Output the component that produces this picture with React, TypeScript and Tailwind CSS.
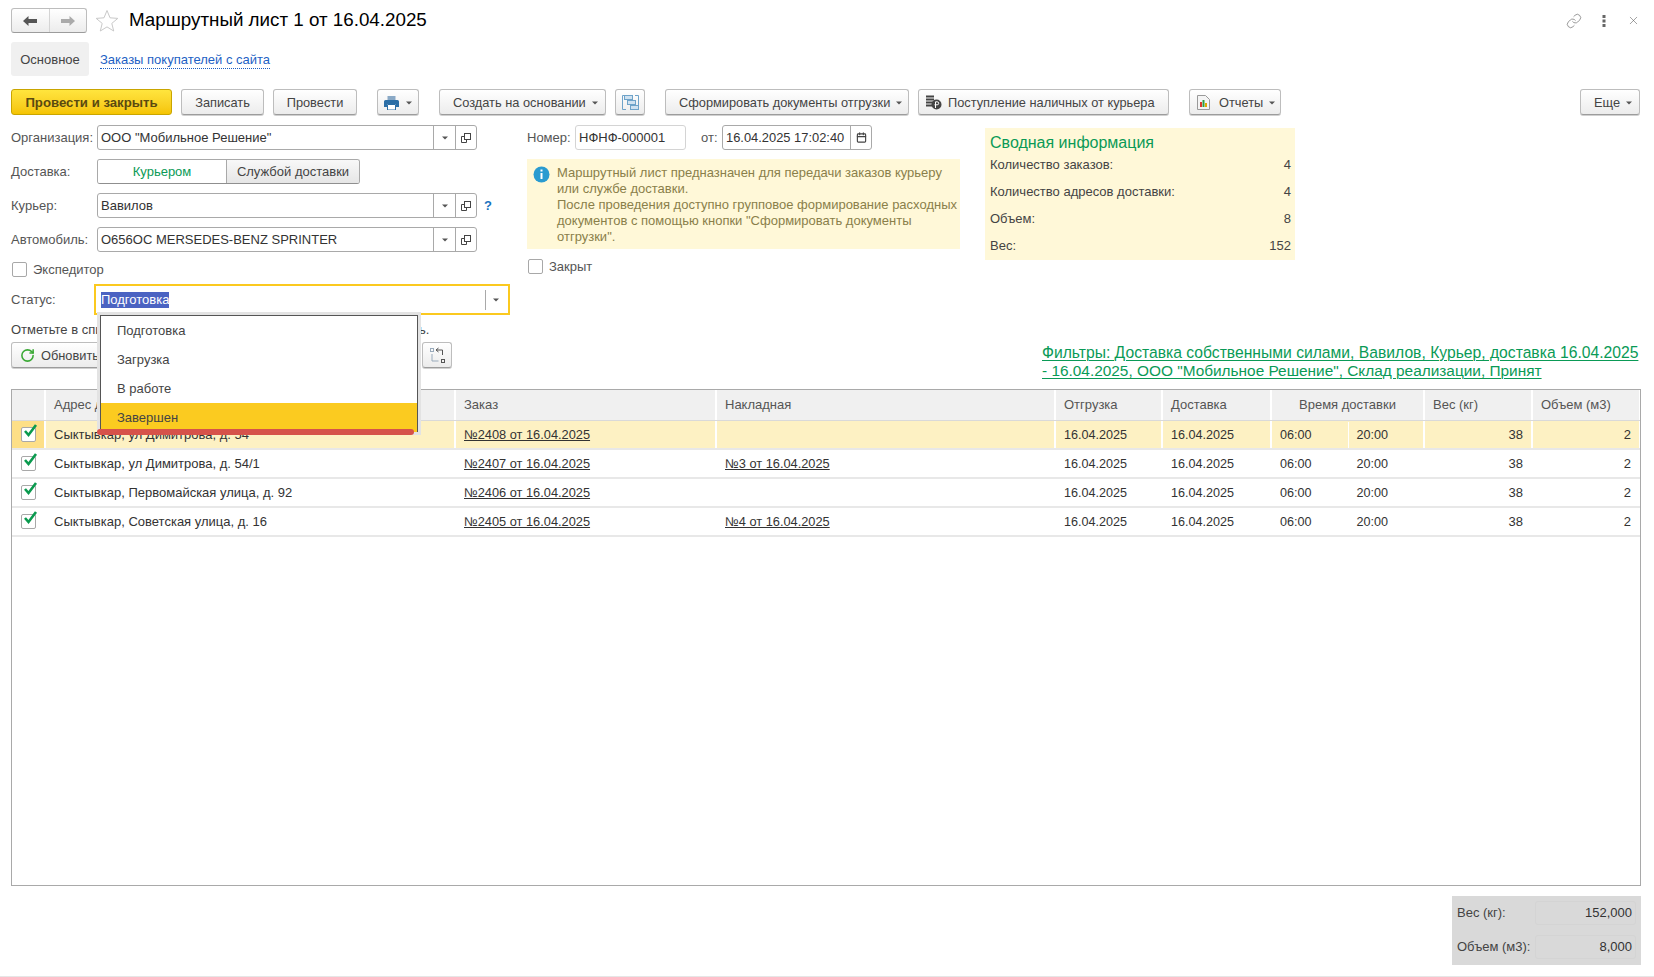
import React from "react";
import { Link, X, RotateCw, Calendar } from "lucide-react";

const Caret = ({ className = "" }: { className?: string }) => (
  <svg width="6" height="4" viewBox="0 0 6 4" className={"shrink-0 " + className}>
    <path d="M0 .5h6L3 3.500z" fill="#555" />
  </svg>
);

const OpenIcon = () => (
  <svg width="12" height="12" viewBox="0 0 12 12" fill="none" stroke="#444" strokeWidth="1">
    <rect x="4.5" y="1.5" width="6" height="6" />
    <path d="M4.5 4.5h-3v6h5v-3" />
  </svg>
);

const Btn = ({ children, className = "" }: { children: React.ReactNode; className?: string }) => (
  <div className={"flex h-[26px] shrink-0 items-center rounded-[3px] border border-[#bdbdbd] border-b-[#9c9c9c] bg-gradient-to-b from-white to-[#ececec] pt-[1px] text-[12.8px] text-[#444] shadow-[0_1px_0_#d0d0d0] " + className}>
    {children}
  </div>
);

const Field = ({ label, value, extra }: { label: string; value: string; extra?: React.ReactNode }) => (
  <div className="flex h-[25px] items-center">
    <span className="w-[86px] shrink-0 text-[#555]">{label}</span>
    <div className="flex h-[25px] w-[380px] items-center rounded-[3px] border border-[#a9a9a9] bg-white">
      <span className="flex-1 truncate pl-[3px] text-[#333]">{value}</span>
      <span className="flex h-full w-[22px] items-center justify-center border-l border-[#a9a9a9]"><Caret /></span>
      <span className="flex h-full w-[21px] items-center justify-center border-l border-[#a9a9a9]"><OpenIcon /></span>
    </div>
    {extra}
  </div>
);

const Check = ({ checked = false }: { checked?: boolean }) => (
  <div className="relative h-[15px] w-[15px] shrink-0 rounded-[2px] border border-[#a8a8a8] bg-white">
    {checked && (
      <svg width="17" height="15" viewBox="0 0 17 15" className="absolute left-[0px] top-[-5px]" fill="none">
        <path d="M3 8l3.5 4L14 2" stroke="#0a9a4e" strokeWidth="2.6" />
      </svg>
    )}
  </div>
);

const rows = [
  { addr: "Сыктывкар, ул Димитрова, д. 54", order: "№2408 от 16.04.2025", inv: "", sel: true },
  { addr: "Сыктывкар, ул Димитрова, д. 54/1", order: "№2407 от 16.04.2025", inv: "№3 от 16.04.2025", sel: false },
  { addr: "Сыктывкар, Первомайская улица, д. 92", order: "№2406 от 16.04.2025", inv: "", sel: false },
  { addr: "Сыктывкар, Советская улица, д. 16", order: "№2405 от 16.04.2025", inv: "№4 от 16.04.2025", sel: false },
];

const cols = "grid grid-cols-[32px_410px_261px_339px_107px_109px_153px_108px_108px]";
const headCell = "flex items-center border-l-2 border-white bg-[#f0f0f0] px-2 text-[#555]";
const cell = "flex items-center border-l-2 px-2 pt-[1px] ";

export default function App() {
  return (
    <div className="relative h-[977px] w-full overflow-hidden bg-white text-[13px] leading-4 text-[#444] [font-family:'Liberation_Sans',Arial,sans-serif]">
      <div className="flex h-[976px] flex-col px-[11px] pt-2">
        {/* header */}
        <div className="flex h-[25px] items-center">
          <div className="flex h-[25px] w-[76px] rounded-[3px] border border-[#bdbdbd] border-b-[#9c9c9c] bg-gradient-to-b from-white to-[#ececec]">
            <span className="flex flex-1 items-center justify-center border-r border-[#d4d4d4]">
              <svg width="14" height="10" viewBox="0 0 14 10"><path d="M0 5l5.5-5v3H14v4H5.5v3z" fill="#555" /></svg>
            </span>
            <span className="flex flex-1 items-center justify-center">
              <svg width="14" height="10" viewBox="0 0 14 10"><path d="M14 5L8.5 0v3H0v4h8.5v3z" fill="#aaa" /></svg>
            </span>
          </div>
          <svg width="24" height="23" viewBox="0 0 24 23" className="ml-[8px]" fill="none">
            <path d="M12 1.5l3 7.3 7.8.6-6 5 1.9 7.6L12 17.900 5.300 22l1.900-7.600-6-5 7.800-.6z" stroke="#c9c9c9" />
          </svg>
          <h1 className="ml-[10px] -translate-y-[1px] text-[18.8px] leading-6 font-normal text-black">Маршрутный лист 1 от 16.04.2025</h1>
          <div className="ml-auto flex items-center pr-[3px]">
            <Link size={16} strokeWidth={1} className="text-[#666]" />
            <svg width="4" height="12" viewBox="0 0 4 12" className="ml-[20px]" fill="#666"><rect x="0.5" y="0" width="3" height="3" /><rect x="0.5" y="4.500" width="3" height="3" /><rect x="0.5" y="9" width="3" height="3" /></svg>
            <X size={13} strokeWidth={1} className="ml-[21px] text-[#555]" />
          </div>
        </div>

        {/* tabs */}
        <div className="mt-[9px] flex h-[34px] items-center">
          <div className="flex h-full w-[78px] items-center justify-center rounded-[3px] bg-[#f0f0f0] pt-[1px] text-[#444]">Основное</div>
          <span className="ml-[11px] mt-[2px] border-b border-dotted border-[#1d5fc4] text-[#1d5fc4]">Заказы покупателей с сайта</span>
        </div>

        {/* toolbar */}
        <div className="mt-[13px] flex items-center">
          <div className="flex h-[26px] w-[161px] shrink-0 items-center justify-center rounded-[3px] border border-[#c9a500] bg-gradient-to-b from-[#ffe53d] to-[#f5c400] pt-[1px] text-[13.2px] font-bold text-[#5a4a10]">Провести и закрыть</div>
          <Btn className="ml-[9px] w-[83px] justify-center">Записать</Btn>
          <Btn className="ml-[9px] w-[84px] justify-center">Провести</Btn>
          <Btn className="ml-[20px] w-[42px] justify-center gap-[7px]">
            <svg width="15" height="14" viewBox="0 0 15 14">
              <path d="M3.500 0h8v4h-8z" fill="#8aa9c6" />
              <path d="M1.500 4h12a1.500 1.500 0 0 1 1.500 1.500V11h-3V8H3v3H0V5.500A1.500 1.500 0 0 1 1.500 4z" fill="#2b6ea6" />
              <path d="M3.500 8.500h8V14h-8z" fill="#fff" stroke="#2b6ea6" />
            </svg>
            <Caret />
          </Btn>
          <Btn className="ml-[20px] w-[167px] gap-[6px] pl-[13px]">Создать на основании <Caret /></Btn>
          <Btn className="ml-[9px] w-[30px] justify-center">
            <svg width="17" height="17" viewBox="0 0 17 17" fill="none" stroke="#6ea3c9">
              <path d="M4 15.500H.5V1.500H4M13 1.500h3.500v14H13" />
              <rect x="2.500" y="1.500" width="8" height="4" fill="#cfe2f1" />
              <rect x="5.500" y="6.500" width="8" height="4" fill="#cfe2f1" />
              <rect x="8.500" y="11.500" width="8" height="4" fill="#cfe2f1" />
            </svg>
          </Btn>
          <Btn className="ml-[20px] w-[244px] gap-[6px] pl-[13px]">Сформировать документы отгрузки <Caret /></Btn>
          <Btn className="ml-[9px] w-[251px] gap-[6px] pl-[6px]">
            <svg width="17" height="15" viewBox="0 0 17 15">
              <path d="M1 1.500h8M1 4.500h8M1 7.500h8M1 10.500h6" stroke="#444" strokeWidth="2" />
              <circle cx="11.500" cy="9.500" r="5" fill="#444" />
              <path d="M10.500 13V6.800h1.700a1.500 1.500 0 0 1 0 3h-2.700" stroke="#fff" fill="none" />
            </svg>
            Поступление наличных от курьера
          </Btn>
          <Btn className="ml-[20px] w-[92px] gap-[9px] pl-[7px]">
            <svg width="13" height="15" viewBox="0 0 13 15">
              <path d="M.5.500h8l4 4v10H.5z" fill="#f4f4f4" stroke="#999" />
              <rect x="3" y="7" width="2" height="5" fill="#d9372c" />
              <rect x="5.500" y="5" width="2" height="7" fill="#2f9e44" />
              <rect x="8" y="8" width="2" height="4" fill="#e0a800" />
            </svg>
            Отчеты <Caret className="-ml-[3px]" />
          </Btn>
          <Btn className="ml-auto mr-[3px] w-[60px] gap-[6px] pl-[13px]">Еще <Caret /></Btn>
        </div>

        {/* form */}
        <div className="mt-[10px] flex items-start">
          <div className="flex w-[516px] shrink-0 flex-col">
            <Field label="Организация:" value={'ООО "Мобильное Решение"'} />
            <div className="mt-[9px] flex h-[25px] items-center">
              <span className="w-[86px] text-[#555]">Доставка:</span>
              <div className="flex h-[25px] w-[263px] overflow-hidden rounded-[3px] border border-[#a9a9a9] border-b-[#8f8f8f]">
                <span className="flex w-[128px] items-center justify-center bg-white text-[#0a9a56]">Курьером</span>
                <span className="flex flex-1 items-center justify-center border-l border-[#a9a9a9] bg-gradient-to-b from-[#f8f8f8] to-[#e6e6e6] text-[#444]">Службой доставки</span>
              </div>
            </div>
            <div className="mt-[9px]">
              <Field label="Курьер:" value="Вавилов" extra={<span className="ml-[7px] font-bold text-[#1a73c0]">?</span>} />
            </div>
            <div className="mt-[9px]">
              <Field label="Автомобиль:" value="О656ОС MERSEDES-BENZ SPRINTER" />
            </div>
            <div className="mt-[10px] flex h-[15px] items-center pl-[1px]">
              <Check />
              <span className="ml-[6px] text-[#555]">Экспедитор</span>
            </div>
            <div className="mt-[7px] flex h-[31px] items-center">
              <span className="w-[83px] shrink-0 text-[#555]">Статус:</span>
              <div className="flex h-[31px] w-[416px] items-center border-2 border-[#fbc91f] bg-white pr-[2px]">
                <span className="ml-[5px] bg-[#4b63c2] text-white">Подготовка</span>
                <span className="ml-auto flex h-[20px] w-[21px] items-center justify-center border-l border-[#a9a9a9]"><Caret /></span>
              </div>
            </div>
          </div>

          <div className="flex w-[458px] shrink-0 flex-col">
            <div className="flex h-[25px] items-center">
              <span className="w-[48px] text-[#555]">Номер:</span>
              <span className="flex h-[25px] w-[111px] items-center rounded-[3px] border border-[#d4d4d4] pl-[3px] text-[#333]">НФНФ-000001</span>
              <span className="ml-[15px] w-[21px] text-[#555]">от:</span>
              <span className="flex h-[25px] w-[150px] items-center rounded-[3px] border border-[#a9a9a9]">
                <span className="flex-1 pl-[3px] text-[12.9px] text-[#333]">16.04.2025 17:02:40</span>
                <span className="flex h-full w-[21px] items-center justify-center border-l border-[#a9a9a9]">
                  <Calendar size={11} strokeWidth={2.5} className="text-[#444]" />
                </span>
              </span>
            </div>
            <div className="mt-[9px] flex h-[90px] w-[433px] bg-[#fff8d8] pt-[6px]">
              <svg width="17" height="17" viewBox="0 0 17 17" className="ml-[6px] mt-[1px] shrink-0">
                <circle cx="8.500" cy="8.500" r="8" fill="#2a9bd0" />
                <rect x="7.500" y="7" width="2" height="6" fill="#fff" />
                <rect x="7.500" y="3.500" width="2" height="2" fill="#fff" />
              </svg>
              <p className="ml-[7px] text-[#8a7f4a]">
                Маршрутный лист предназначен для передачи заказов курьеру<br />
                или службе доставки.<br />
                После проведения доступно групповое формирование расходных<br />
                документов с помощью кнопки "Сформировать документы<br />
                отгрузки".
              </p>
            </div>
            <div className="mt-[10px] flex h-[15px] items-center pl-[1px]">
              <Check />
              <span className="ml-[6px] text-[#555]">Закрыт</span>
            </div>
          </div>

          <div className="mt-[3px] flex h-[132px] w-[310px] shrink-0 flex-col bg-[#fff8d8] pl-[5px] pr-[4px]">
            <div className="mt-[6px] text-[16px] leading-[18px] text-[#0a9a56]">Сводная информация</div>
            {[["Количество заказов:", "4"], ["Количество адресов доставки:", "4"], ["Объем:", "8"], ["Вес:", "152"]].map(([a, b], i) => (
              <div key={a} className={"flex h-[16px] justify-between text-[#444] " + (i === 0 ? "mt-[5px]" : "mt-[11px]")}>
                <span>{a}</span>
                <span>{b}</span>
              </div>
            ))}
          </div>
        </div>

        {/* hint */}
        <div className="mt-[7px] h-[16px] whitespace-nowrap text-[#444]">Отметьте в списке заказы, которые курьер должен завтра доставить.</div>

        {/* table toolbar */}
        <div className="mt-[4px] flex h-[47px] items-start">
          <Btn className="w-[160px] gap-[6px] pl-[8px]">
            <RotateCw size={15} strokeWidth={2.5} className="text-[#3aa935]" />
            Обновить
          </Btn>
          <Btn className="ml-[251px] w-[30px] justify-center">
            <svg width="17" height="17" viewBox="0 0 17 17" fill="none" stroke="#555">
              <rect x="1.500" y="1.500" width="3" height="3" stroke="#9ab" />
              <rect x="12.500" y="12.500" width="3" height="3" />
              <path d="M7 3h6.500v5M7 3l2.500-2M7 3l2.500 2" />
              <path d="M3 7v7h6.500" stroke="#9ab" />
            </svg>
          </Btn>
          <div className="ml-auto mr-[1px] mt-[2px] w-[600px] whitespace-nowrap text-[#0a9a56]">
            <div className="h-[18px] text-[15.68px] leading-[18px] underline decoration-1 underline-offset-2">Фильтры: Доставка собственными силами, Вавилов, Курьер, доставка 16.04.2025</div>
            <div className="h-[18px] w-fit text-[15.4px] leading-[18px] underline decoration-1 underline-offset-2">- 16.04.2025, ООО "Мобильное Решение", Склад реализации, Принят</div>
          </div>
        </div>

        {/* table */}
        <div className="flex h-[497px] w-[1630px] flex-col border border-[#a9a9a9]">
          <div className={cols + " h-[31px] border-b border-[#d9d9d9]"}>
            <div className="bg-[#f0f0f0]"></div>
            <div className={headCell}>Адрес доставки</div>
            <div className={headCell}>Заказ</div>
            <div className={headCell}>Накладная</div>
            <div className={headCell}>Отгрузка</div>
            <div className={headCell}>Доставка</div>
            <div className={headCell + " justify-center"}>Время доставки</div>
            <div className={headCell}>Вес (кг)</div>
            <div className={headCell}>Объем (м3)</div>
          </div>
          {rows.map((r) => {
            const bg = r.sel ? "bg-[#fdf1c3] border-white" : "bg-white border-transparent";
            return (
              <div key={r.order} className={cols + " h-[29px] border-b-2 border-[#e8e8e8] text-[#333]"}>
                <div className={"flex items-center justify-center " + (r.sel ? "bg-[#fddf87]" : "bg-white")}><Check checked /></div>
                <div className={cell + bg}>{r.addr}</div>
                <div className={cell + bg}><span className="text-[12.8px] underline">{r.order}</span></div>
                <div className={cell + bg}><span className="text-[12.8px] underline">{r.inv}</span></div>
                <div className={cell + "text-[12.6px] " + bg}>16.04.2025</div>
                <div className={cell + "text-[12.6px] " + bg}>16.04.2025</div>
                <div className={"grid grid-cols-2 border-l-2 pt-[1px] text-[12.6px] " + bg}>
                  <span className="flex items-center pl-2">06:00</span>
                  <span className={"flex items-center border-l pl-2 " + (r.sel ? "border-white" : "border-transparent")}>20:00</span>
                </div>
                <div className={cell + "justify-end " + bg}>38</div>
                <div className={cell + "justify-end " + bg}>2</div>
              </div>
            );
          })}
        </div>

        {/* totals */}
        <div className="mt-[10px] flex justify-end">
          <div className="mr-[2px] flex h-[69px] w-[189px] flex-col gap-[10px] bg-[#d9d9d9] pl-[5px] pr-[5px] pt-[5px]">
            {[["Вес (кг):", "152,000"], ["Объем (м3):", "8,000"]].map(([a, b]) => (
              <div key={a} className="flex h-[24px] items-center">
                <span className="w-[78px] text-[#444]">{a}</span>
                <span className="flex h-[24px] flex-1 items-center justify-end rounded-[3px] border border-[#d4d4d4] pr-[3px] text-[#333]">{b}</span>
              </div>
            ))}
          </div>
        </div>
      </div>
      <div className="h-px w-full bg-[#e6e6e6]"></div>

      {/* dropdown overlay */}
      <div className="absolute left-[97px] top-[312px] h-[123px] w-[324px] border-[3px] border-[#e3e3e3] bg-white">
        <div className="h-[117px] border border-[#555] border-b-0">
          {["Подготовка", "Загрузка", "В работе", "Завершен"].map((t, i) => (
            <div key={t} className={"flex h-[29px] items-center pl-[16px] text-[#444] " + (i === 3 ? "bg-[#fbcb20]" : "")}>{t}</div>
          ))}
        </div>
      </div>
      <div className="absolute left-[97px] top-[429px] h-[6px] w-[317px] rounded-[3px] bg-[#d6524a]"></div>
    </div>
  );
}
